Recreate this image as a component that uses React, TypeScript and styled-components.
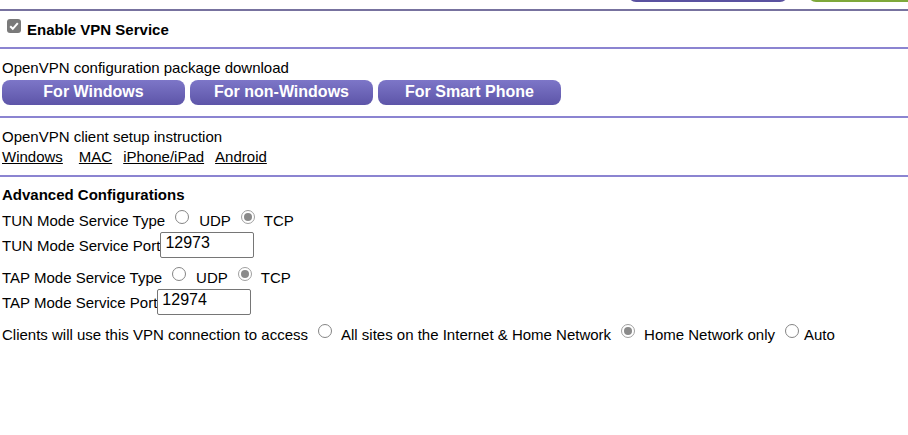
import React from "react";
import styled, { createGlobalStyle } from "styled-components";

const Global = createGlobalStyle`
  html, body { margin: 0; padding: 0; background: #fff; }
  body { font-family: "Liberation Sans", Arial, sans-serif; font-size: 15px; color: #000; }
`;

const Page = styled.div`
  width: 908px;
  display: flex;
  flex-direction: column;
`;

const TopBar = styled.div`
  height: 9px;
  position: relative;
  overflow: hidden;
`;

const TopButton = styled.div<{ $left: number; $width: number; $color: string }>`
  position: absolute;
  top: -20px;
  left: ${(p) => p.$left}px;
  width: ${(p) => p.$width}px;
  height: 22px;
  border-radius: 8px;
  background: ${(p) => p.$color};
`;

const Rule = styled.div<{ $dark?: boolean }>`
  height: 2px;
  background: ${(p) => (p.$dark ? "#77729f" : "#8b84d1")};
  width: 100%;
`;

const Section = styled.div<{ $pt: number; $pb: number }>`
  padding: ${(p) => p.$pt}px 2px ${(p) => p.$pb}px 2px;
  display: flex;
  flex-direction: column;
`;

const EnableRow = styled.label`
  display: flex;
  align-items: center;
  gap: 6px;
  padding-left: 7px;
  font-weight: bold;
  font-size: 15px;
  height: 36px;
`;

const CheckBox = styled.span`
  width: 14px;
  height: 14px;
  border-radius: 3px;
  background: #7a7a7a;
  display: inline-flex;
  align-items: center;
  justify-content: center;
  margin-top: -6px;
`;

const Line = styled.div`
  line-height: 16px;
  height: 16px;
  white-space: nowrap;
  display: flex;
  align-items: center;
`;

const ButtonRow = styled.div`
  display: flex;
  gap: 5px;
  margin-top: 4px;
`;

const PurpleButton = styled.button`
  width: 183px;
  height: 25px;
  border: none;
  border-radius: 8px;
  background: linear-gradient(#7d76c8, #5d55a8);
  color: #fff;
  font-family: "Liberation Sans", Arial, sans-serif;
  font-weight: bold;
  font-size: 16px;
  padding: 0 0 2px 0;
  cursor: pointer;
`;

const LinkRow = styled.div`
  display: flex;
  line-height: 16px;
  margin-top: 4px;
`;

const Link = styled.a<{ $ml: number }>`
  color: #000;
  text-decoration: underline;
  margin-left: ${(p) => p.$ml}px;
`;

const Heading = styled.div`
  font-weight: bold;
  line-height: 16px;
`;

const FieldRow = styled.div<{ $mt: number }>`
  display: flex;
  align-items: center;
  white-space: nowrap;
  margin-top: ${(p) => p.$mt}px;
  height: 16px;
`;

const PortRow = styled.div<{ $mt: number }>`
  display: flex;
  align-items: center;
  white-space: nowrap;
  margin-top: ${(p) => p.$mt}px;
`;

const Radio = styled.span<{ $checked?: boolean; $ml: number; $mr: number }>`
  width: 14px;
  height: 14px;
  border-radius: 50%;
  box-sizing: border-box;
  border: 1px solid ${(p) => (p.$checked ? "#a0a0a0" : "#858585")};
  background: #fff;
  margin-left: ${(p) => p.$ml}px;
  margin-right: ${(p) => p.$mr}px;
  margin-top: -6px;
  display: inline-flex;
  align-items: center;
  justify-content: center;
  flex: none;
  &::after {
    content: "";
    display: ${(p) => (p.$checked ? "block" : "none")};
    width: 8px;
    height: 8px;
    border-radius: 50%;
    background: #8a8a8a;
  }
`;

const PortInput = styled.input`
  width: 94px;
  height: 26px;
  box-sizing: border-box;
  border: 1px solid #767676;
  border-radius: 2px;
  padding: 0 4px 4px 4px;
  font-family: "Liberation Sans", Arial, sans-serif;
  font-size: 16px;
  color: #000;
  outline: none;
`;

function Check() {
  return (
    <CheckBox>
      <svg width="12" height="12" viewBox="0 0 12 12">
        <path d="M2.2 6.2 L4.8 8.8 L9.8 3.2" stroke="#fff" strokeWidth="2" fill="none" />
      </svg>
    </CheckBox>
  );
}

export default function App() {
  return (
    <Page>
      <Global />
      <TopBar>
        <TopButton $left={628} $width={160} $color="#5a52a0" />
        <TopButton $left={808} $width={120} $color="#7ea83a" />
      </TopBar>
      <Rule $dark />
      <EnableRow>
        <Check />
        Enable VPN Service
      </EnableRow>
      <Rule />
      <Section $pt={11} $pb={11}>
        <Line>OpenVPN configuration package download</Line>
        <ButtonRow>
          <PurpleButton>For Windows</PurpleButton>
          <PurpleButton>For non-Windows</PurpleButton>
          <PurpleButton>For Smart Phone</PurpleButton>
        </ButtonRow>
      </Section>
      <Rule />
      <Section $pt={11} $pb={10}>
        <Line>OpenVPN client setup instruction</Line>
        <LinkRow>
          <Link $ml={0}>Windows</Link>
          <Link $ml={16}>MAC</Link>
          <Link $ml={11}>iPhone/iPad</Link>
          <Link $ml={11}>Android</Link>
        </LinkRow>
      </Section>
      <Rule />
      <Section $pt={10} $pb={20}>
        <Heading>Advanced Configurations</Heading>
        <FieldRow $mt={9}>
          TUN Mode Service Type
          <Radio $ml={10} $mr={10} />
          UDP
          <Radio $ml={10} $mr={9} $checked />
          TCP
        </FieldRow>
        <PortRow $mt={4}>
          TUN Mode Service Port
          <PortInput defaultValue="12973" />
        </PortRow>
        <FieldRow $mt={11}>
          TAP Mode Service Type
          <Radio $ml={10} $mr={10} />
          UDP
          <Radio $ml={10} $mr={9} $checked />
          TCP
        </FieldRow>
        <PortRow $mt={4}>
          TAP Mode Service Port
          <PortInput defaultValue="12974" />
        </PortRow>
        <FieldRow $mt={11}>
          Clients will use this VPN connection to access
          <Radio $ml={10} $mr={9} />
          All sites on the Internet &amp; Home Network
          <Radio $ml={10} $mr={9} $checked />
          Home Network only
          <Radio $ml={10} $mr={5} />
          Auto
        </FieldRow>
      </Section>
    </Page>
  );
}
